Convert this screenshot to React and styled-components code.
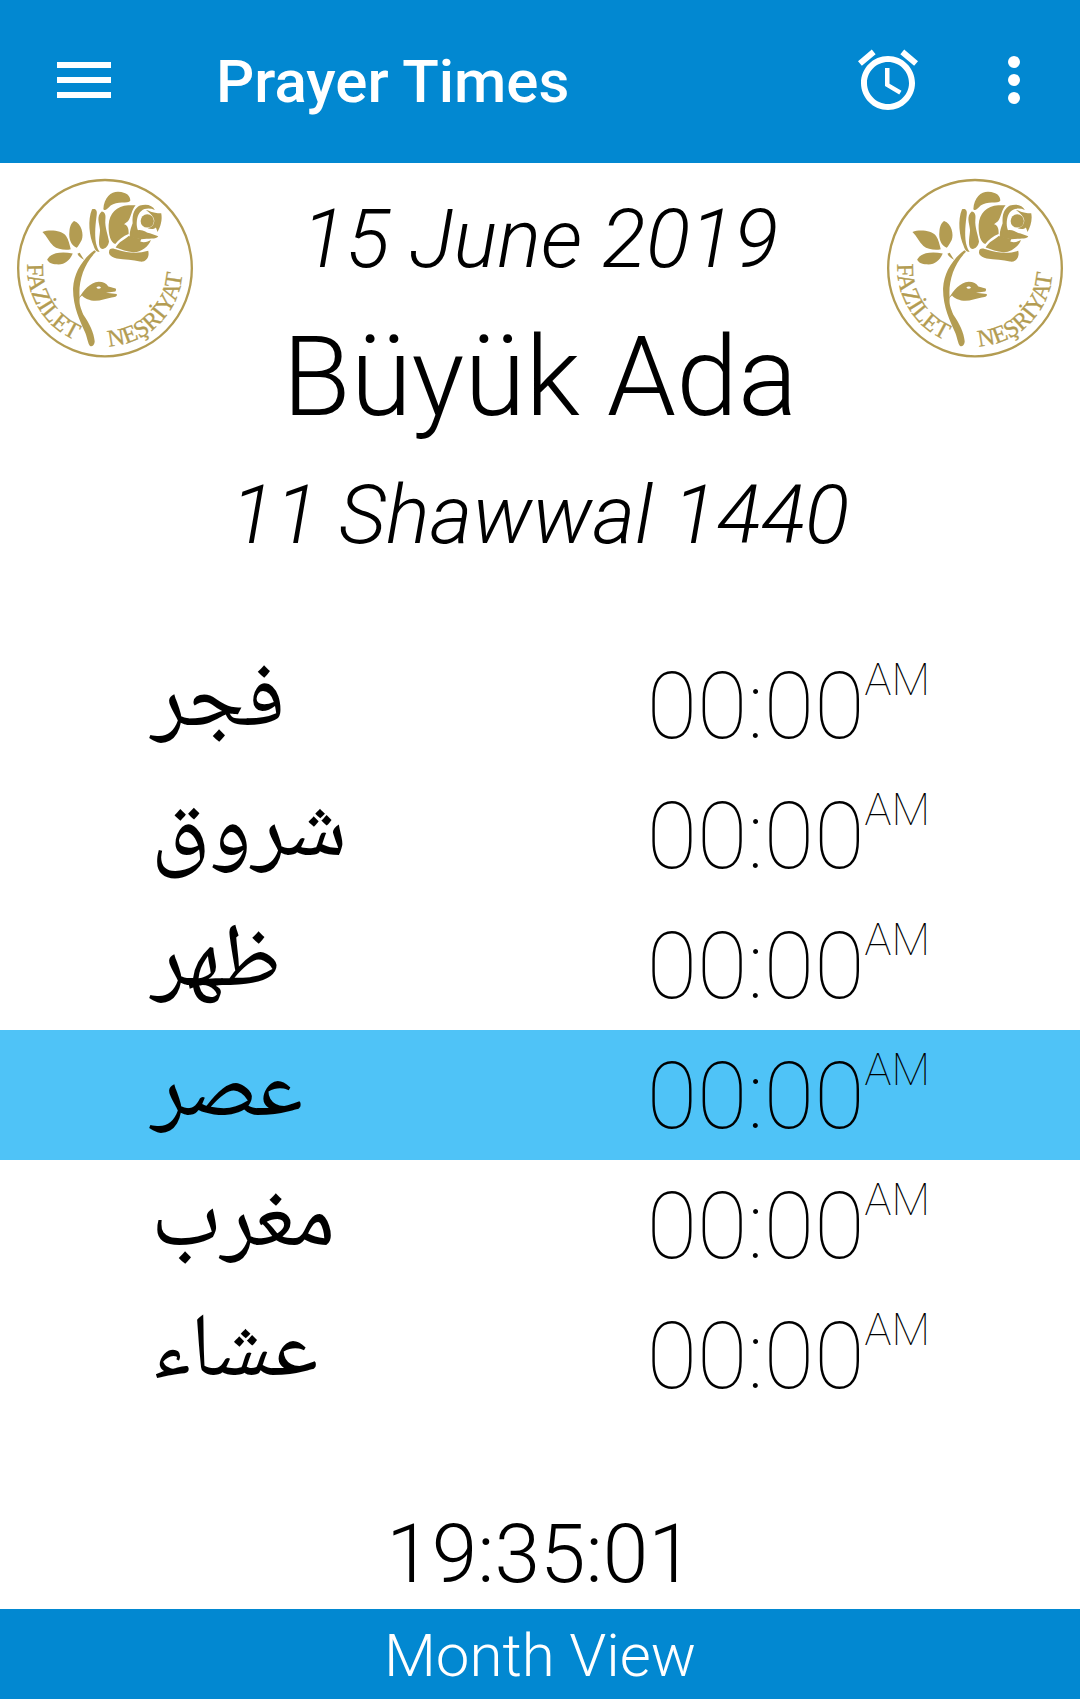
import React from "react";
import styled, { createGlobalStyle } from "styled-components";

const GlobalStyle = createGlobalStyle`
  * { box-sizing: border-box; }
  body {
    margin: 0;
    background: #fff;
    color: #000;
    font-family: Roboto, "Liberation Sans", sans-serif;
  }
`;

const Screen = styled.div`
  display: flex;
  flex-direction: column;
  min-height: 100vh;
`;

const AppBar = styled.header`
  display: flex;
  align-items: center;
  height: 163px;
  padding: 0 30px 4px 48px;
  background: #0288d1;
  color: #fff;
`;

const IconButton = styled.button`
  display: block;
  padding: 0;
  border: 0;
  background: none;
  color: inherit;
  cursor: pointer;
`;

const Icon = styled.svg`
  display: block;
  width: 72px;
  height: 72px;
  fill: currentColor;
`;

const Title = styled.h1`
  flex: 1;
  margin: 0 0 0 96px;
  padding-top: 5px;
  font-size: 60px;
  line-height: 72px;
  font-weight: 500;
`;

const Actions = styled.div`
  display: flex;
  gap: 54px;
`;

const Main = styled.main`
  flex: 1;
  display: flex;
  flex-direction: column;
`;

const Masthead = styled.section`
  display: flex;
  justify-content: space-between;
  align-items: flex-start;
  padding: 15px 16px 0;
`;

const LogoArt = styled.svg`
  flex: none;
  display: block;
  width: 178px;
  height: 181px;
  fill: #b39c52;
`;

const LogoText = styled.text`
  font-family: "Liberation Serif", serif;
  font-size: 72px;
  stroke: #b39c52;
  stroke-width: 1px;
`;

const Place = styled.div`
  padding-top: 7px;
  text-align: center;
  font-weight: 300;
`;

const DateLine = styled.p`
  margin: 0;
  font-size: 82px;
  line-height: 108px;
  font-style: italic;
`;

const City = styled.h2`
  margin: 0;
  font-size: 111px;
  line-height: 168px;
  font-weight: 300;
`;

const Times = styled.table`
  width: 100%;
  margin-top: 71px;
  border-collapse: collapse;
`;

const TimeRow = styled.tr`
  height: 130px;
  background: ${(p) => (p.$active ? "#4fc3f7" : "transparent")};
`;

const Name = styled.th`
  padding: 2px 0 0 151px;
  text-align: left;
  font-family: "Noto Naskh Arabic", "Noto Sans Arabic", "DejaVu Sans", sans-serif;
  font-size: 90px;
  line-height: 100px;
  font-weight: 400;
`;

const Time = styled.td`
  padding: 4px 150px 0 0;
  text-align: right;
  font-size: 92px;
  line-height: 100px;
  font-weight: 100;
`;

const Period = styled.sup`
  font-size: 45px;
  line-height: 0;
  vertical-align: 43px;
`;

const Clock = styled.time`
  margin-top: auto;
  padding-bottom: 8px;
  text-align: center;
  font-size: 82px;
  line-height: 94px;
  font-weight: 300;
`;

const MonthButton = styled.button`
  height: 90px;
  padding: 4px 0 0;
  border: 0;
  background: #0288d1;
  color: #fff;
  font-family: inherit;
  font-size: 60px;
  line-height: 72px;
  font-weight: 300;
  cursor: pointer;
`;

const PRAYERS = [
  { name: "فجر", time: "00:00" },
  { name: "شروق", time: "00:00" },
  { name: "ظهر", time: "00:00" },
  { name: "عصر", time: "00:00", active: true },
  { name: "مغرب", time: "00:00" },
  { name: "عشاء", time: "00:00" },
];

function Logo({ id }) {
  return (
    <LogoArt viewBox="48 54 534 544" role="img" aria-label="Fazilet Neşriyat">
      <defs>
        <path id={id + "-left"} d="M82 312 A234 236 0 0 0 315 560" />
        <path id={id + "-right"} d="M326 560 A232 234 0 0 0 546 300" />
      </defs>
      <ellipse cx="315" cy="325" rx="261" ry="265" fill="none" stroke="#b39c52" strokeWidth="7" />
      {/* leaves */}
      <path d="M127 216C150 208 185 212 198 228C206 240 208 252 212 268C195 272 172 268 160 258C147 246 140 228 127 216Z" />
      <path d="M222 183C245 190 252 225 245 240C238 252 235 258 230 264C215 258 205 240 208 215C209 200 214 188 222 183Z" />
      <path d="M141 300C150 280 180 274 218 281C210 300 195 314 175 314C160 314 148 312 141 300Z" />
      <path d="M232 282L239 279L252 300C240 293 235 288 232 282Z" />
      {/* stem and bud */}
      <path d="M283 271C245 300 222 340 219 385C218 440 240 485 256 520C263 540 264 552 270 559C279 563 284 553 284 545C282 520 268 490 250 465C240 440 237 430 239 414C234 370 250 312 288 276Z" />
      <path fillRule="evenodd" d="M236 416C250 392 270 368 296 366C310 366 320 372 325 380L347 386C350 390 347 393 346 395L318 399L350 403C353 409 348 412 335 413C315 416 300 425 280 423C262 420 250 412 246 407ZM289 384C293 378 301 380 303 384C299 388 293 388 289 384Z" />
      {/* rose petals */}
      <path d="M276 148C288 144 292 152 290 165C287 190 283 220 288 250C291 262 294 270 299 276C288 276 284 268 281 258C268 230 262 180 276 148Z" />
      <path d="M305 155C315 156 318 165 316 180C314 200 325 230 327 245C325 262 310 272 302 265C292 255 300 225 300 210C298 190 288 170 305 155Z" />
      <path d="M310 148C312 110 335 94 355 95C380 96 392 108 391 122C385 132 350 122 332 137C322 146 318 155 310 148Z" />
      <path d="M326 195C328 160 350 138 385 136L407 136C395 150 394 170 384 184L372 193C382 195 387 205 386 222C370 228 355 240 346 252C332 248 325 225 326 195Z" />
      <path d="M347 263C355 246 375 238 386 228L424 237L421 245C435 250 445 244 453 240C447 260 420 279 400 277C380 275 365 270 347 263Z" />
      <path d="M327 278C327 262 340 265 352 270C385 280 415 282 445 273C450 295 435 308 420 305C400 300 375 300 350 296C338 293 328 288 327 278Z" />
      <path d="M390 232C388 215 393 205 398 190C396 160 405 145 420 137C440 130 458 136 465 150C440 140 418 148 412 175C408 195 412 205 414 211C430 208 440 220 450 220L475 229C470 240 445 234 424 238Z" />
      <circle cx="442" cy="183" r="20" />
      <path d="M438 150C446 150 455 160 484 160C488 180 482 200 473 216C471 212 470 208 468 203C460 210 450 207 443 205C455 202 464 194 463 180C461 168 448 158 438 150Z" />
      <LogoText>
        <textPath href={"#" + id + "-left"}>FAZİLET</textPath>
      </LogoText>
      <LogoText>
        <textPath href={"#" + id + "-right"}>NEŞRİYAT</textPath>
      </LogoText>
    </LogoArt>
  );
}

export default function App() {
  return (
    <>
      <GlobalStyle />
      <Screen>
        <AppBar>
          <IconButton aria-label="Menu">
            <Icon viewBox="0 0 24 24">
              <path d="M3 18h18v-2H3v2zm0-5h18v-2H3v2zm0-7v2h18V6H3z" />
            </Icon>
          </IconButton>
          <Title>Prayer Times</Title>
          <Actions>
            <IconButton aria-label="Alarms">
              <Icon viewBox="0 0 24 24">
                <path d="M22 5.72l-4.6-3.86-1.29 1.53 4.6 3.86L22 5.72zM7.88 3.39L6.6 1.86 2 5.71l1.29 1.53 4.59-3.85zM12.5 8H11v6l4.75 2.85.75-1.23-4-2.37V8zM12 4c-4.97 0-9 4.03-9 9s4.02 9 9 9c4.97 0 9-4.03 9-9s-4.03-9-9-9zm0 16c-3.87 0-7-3.13-7-7s3.13-7 7-7 7 3.13 7 7-3.13 7-7 7z" />
              </Icon>
            </IconButton>
            <IconButton aria-label="More options">
              <Icon viewBox="0 0 24 24">
                <circle cx="12" cy="6" r="2" />
                <circle cx="12" cy="12" r="2" />
                <circle cx="12" cy="18" r="2" />
              </Icon>
            </IconButton>
          </Actions>
        </AppBar>
        <Main>
          <Masthead>
            <Logo id="logo-start" />
            <Place>
              <DateLine>15 June 2019</DateLine>
              <City>Büyük Ada</City>
              <DateLine>11 Shawwal 1440</DateLine>
            </Place>
            <Logo id="logo-end" />
          </Masthead>
          <Times>
            <tbody>
              {PRAYERS.map((p) => (
                <TimeRow key={p.name} $active={p.active}>
                  <Name scope="row" lang="ar">{p.name}</Name>
                  <Time>
                    {p.time}
                    <Period>AM</Period>
                  </Time>
                </TimeRow>
              ))}
            </tbody>
          </Times>
          <Clock>19:35:01</Clock>
        </Main>
        <MonthButton>Month View</MonthButton>
      </Screen>
    </>
  );
}
